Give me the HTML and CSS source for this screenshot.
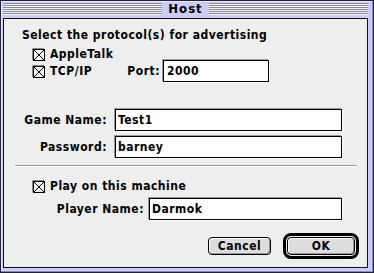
FILE: index.html
```html
<!DOCTYPE html>
<html lang="en">
<head>
  <meta charset="UTF-8" />
  <title>Host</title>
  <link rel="stylesheet" href="styles.css">
</head>
<body>
  <div class="window">
    <div class="titlebar">
      <span class="stripes"></span>
      <span class="title">Host</span>
      <span class="stripes"></span>
    </div>
    <div class="content">
      <p class="heading">Select the protocol(s) for advertising</p>

      <div class="check-row apple">
        <svg class="check" width="13" height="13" viewBox="0 0 13 13"><path d="M0.5 12V0.5H12" fill="none" stroke="#8a8a8a"/><rect x="1.5" y="1.5" width="11" height="11" fill="#f4f4f4" stroke="#000"/><path d="M2 2L12 12M12 2L2 12" stroke="#000"/></svg>
        <span>AppleTalk</span>
      </div>

      <div class="check-row tcp">
        <svg class="check" width="13" height="13" viewBox="0 0 13 13"><path d="M0.5 12V0.5H12" fill="none" stroke="#8a8a8a"/><rect x="1.5" y="1.5" width="11" height="11" fill="#f4f4f4" stroke="#000"/><path d="M2 2L12 12M12 2L2 12" stroke="#000"/></svg>
        <span class="tcp-label">TCP/IP</span>
        <label class="port-label">Port:</label>
        <input class="box port" type="text" value="2000" />
      </div>

      <div class="field-row game">
        <label>Game Name:</label>
        <input class="box wide" type="text" value="Test1" />
      </div>
      <div class="field-row pass">
        <label>Password:</label>
        <input class="box wide" type="text" value="barney" />
      </div>

      <div class="divider"></div>

      <div class="check-row play">
        <svg class="check" width="13" height="13" viewBox="0 0 13 13"><path d="M0.5 12V0.5H12" fill="none" stroke="#8a8a8a"/><rect x="1.5" y="1.5" width="11" height="11" fill="#f4f4f4" stroke="#000"/><path d="M2 2L12 12M12 2L2 12" stroke="#000"/></svg>
        <span>Play on this machine</span>
      </div>
      <div class="field-row player">
        <label>Player Name:</label>
        <input class="box" type="text" value="Darmok" />
      </div>

      <div class="buttons">
        <button type="button" class="btn cancel">Cancel</button>
        <span class="default-ring"><button type="button" class="btn ok">OK</button></span>
      </div>
    </div>
  </div>
</body>
</html>
```

FILE: styles.css
```css
body {
  margin: 0;
  background: #ffffff;
  font-family: 'DejaVu Sans Condensed', 'DejaVu Sans', sans-serif;
  font-size: 12px;
  font-weight: bold;
  letter-spacing: 0.5px;
  color: #000;
}

.window {
  width: 374px;
  height: 273px;
  box-sizing: border-box;
  border: 1px solid #22223a;
  background: #ccccf4;
  padding: 0 5px 4px 2px;
  box-shadow: inset -1px -1px 0 #8888bb, inset 1px 1px 0 #e8e8ff;
}

.titlebar {
  display: flex;
  align-items: center;
  height: 17px;
  padding: 2px 0 3px;
  box-sizing: border-box;
}

.stripes {
  flex: 1;
  height: 12px;
  background: repeating-linear-gradient(to bottom, #8a8a96 0 1px, #f4f4f8 1px 2px);
}

.title {
  padding: 0 6px;
  font-size: 13px;
  letter-spacing: 1px;
  line-height: 12px;
}

.content {
  height: 250px;
  box-sizing: border-box;
  border: 1px solid #111;
  background: #eeeeee;
  display: flex;
  flex-direction: column;
  padding-top: 8px;
}

.heading {
  margin: 0 0 0 18px;
  line-height: 16px;
}

.check-row {
  display: flex;
  align-items: center;
  padding-left: 28px;
}

.check {
  display: block;
  margin-right: 5px;
}

.apple {
  margin-top: 5px;
  height: 12px;
  line-height: 12px;
}

.tcp {
  height: 22px;
}

.tcp-label {
  width: 70px;
}

.port-label {
  width: 40px;
  text-align: right;
  margin-right: 3px;
}

.box {
  height: 22px;
  box-sizing: border-box;
  border: 1px solid #000;
  background: #fff;
  padding: 0 2px;
  font: inherit;
  letter-spacing: inherit;
  color: #000;
  box-shadow: -1px -1px 0 #999, 1px 1px 0 #fff;
  outline: none;
}

.port {
  width: 106px;
  padding-left: 3px;
}

.field-row {
  display: flex;
  align-items: center;
  height: 22px;
}

.field-row label {
  text-align: right;
}

.game {
  margin-top: 27px;
}

.pass {
  margin-top: 5px;
}

.game label, .pass label {
  width: 103px;
  margin-right: 8px;
}

.wide {
  width: 227px;
}

.divider {
  margin: 7px 0 0 11px;
  width: 342px;
  height: 1px;
  background: #999;
  box-shadow: 0 1px 0 #fff;
}

.play {
  margin-top: 14px;
  height: 12px;
  line-height: 12px;
}

.player {
  margin-top: 6px;
}

.player label {
  width: 140px;
  margin-right: 5px;
}

.player .box {
  width: 193px;
}

.buttons {
  display: flex;
  justify-content: flex-end;
  align-items: center;
  margin-top: 13px;
  padding-right: 8px;
}

.btn {
  height: 18px;
  box-sizing: border-box;
  border: 1px solid #000;
  border-radius: 4px;
  background: #dddddd;
  box-shadow: inset 1px 1px 0 #fff, inset -1px -1px 0 #999;
  font: inherit;
  letter-spacing: inherit;
  color: #000;
  padding: 0;
}

.cancel {
  width: 63px;
  margin-right: 12px;
}

.default-ring {
  display: flex;
  border: 3px solid #000;
  border-radius: 8px;
  padding: 1px;
}

.ok {
  width: 68px;
}
```
